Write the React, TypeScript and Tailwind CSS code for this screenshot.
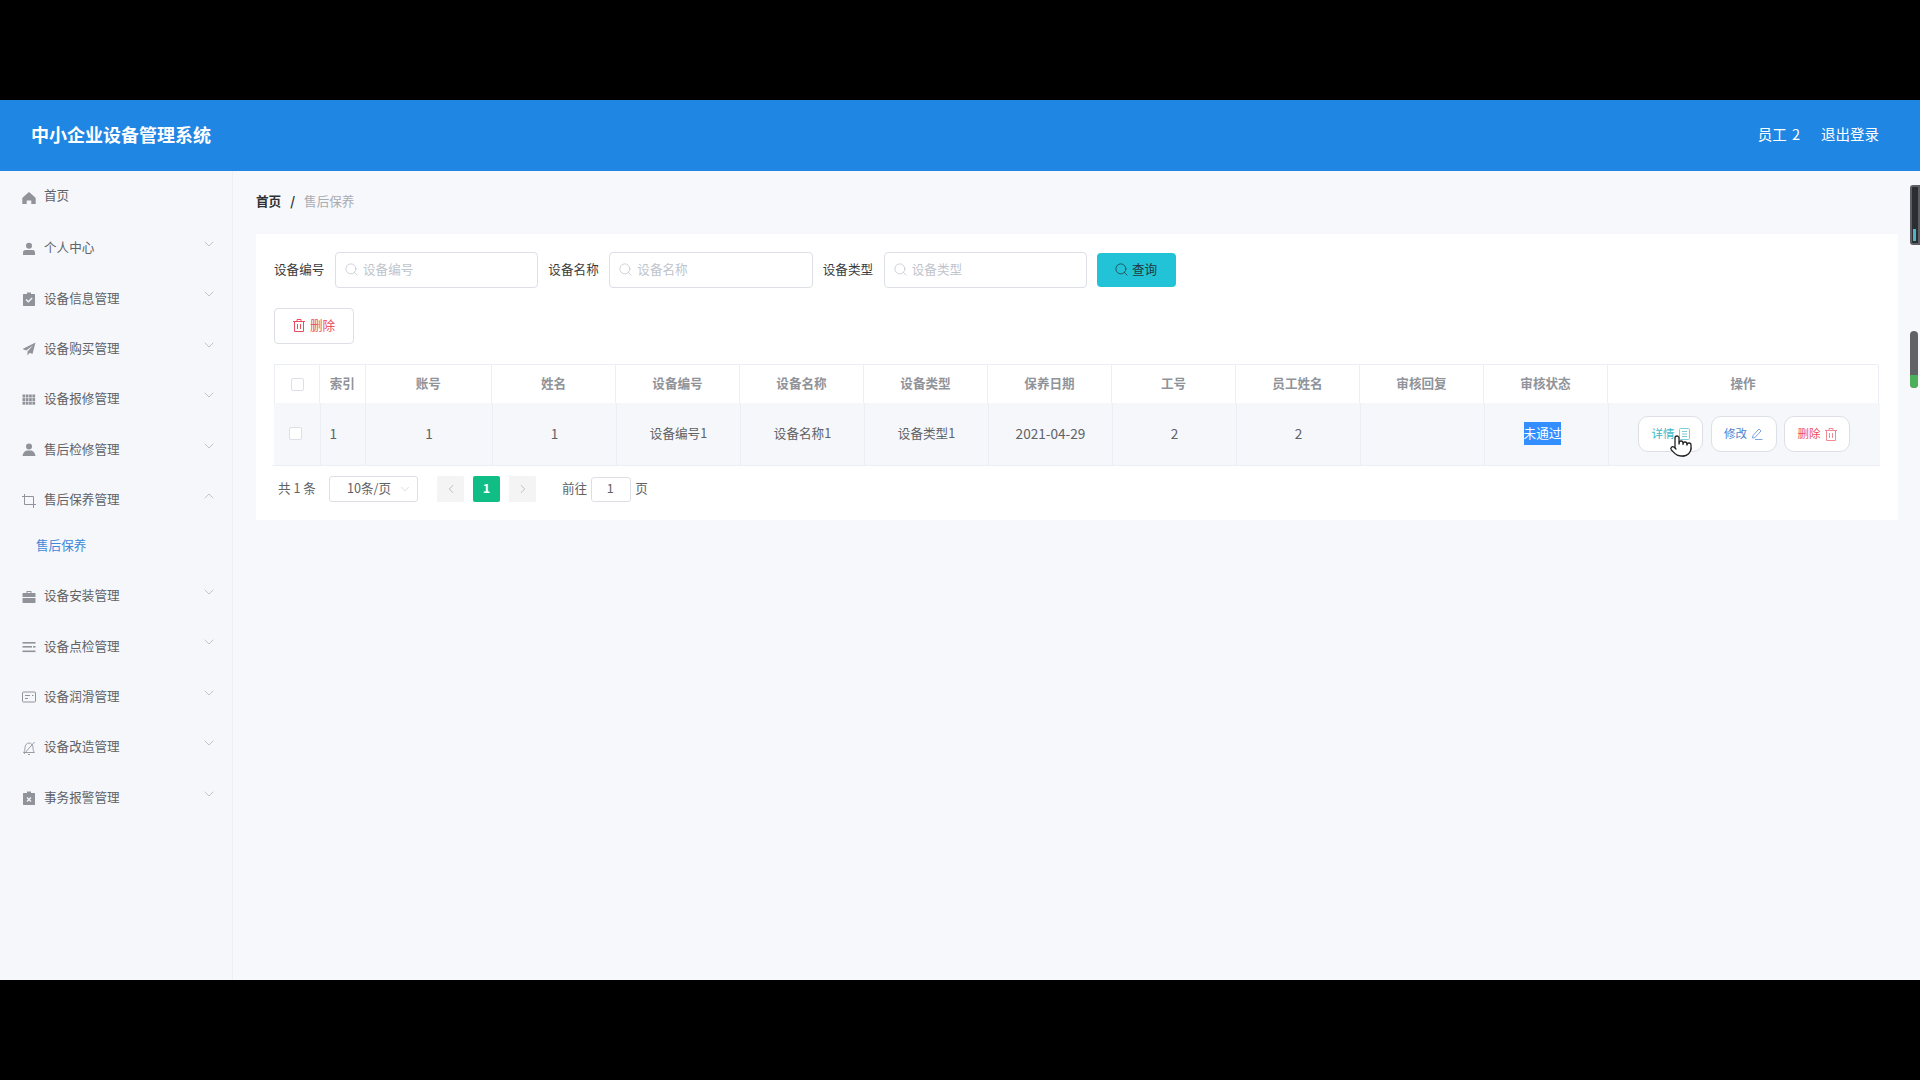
import { ChevronDown, ChevronLeft, ChevronRight, ChevronUp, Pointer, Search } from 'lucide-react'
import type { ReactNode } from 'react'

const gray = '#909399'

const HomeIcon = () => (
  <svg width="14" height="14" viewBox="0 0 14 14" fill={gray}>
    <path d="M7 1 1 6.2c-.6.5-.7 1-.7 1.6V13h4.4V9.400h4.600V13h4.400V7.800c0-.6-.1-1.100-.7-1.600z" />
  </svg>
)
const UserIcon = () => (
  <svg width="14" height="14" viewBox="0 0 14 14" fill={gray}>
    <circle cx="7" cy="3.800" r="3" />
    <path d="M1 10.500C1 8.800 2.200 8 3.500 8h7c1.300 0 2.500.8 2.500 2.500V13H1z" />
  </svg>
)
const ClipIcon = ({ mark }: { mark: 'check' | 'x' }) => (
  <svg width="14" height="14" viewBox="0 0 14 14">
    <path fill={gray} d="M5 .5h4V2h3.500c.3 0 .5.2.5.5v11c0 .3-.2.5-.5.5h-11c-.3 0-.5-.2-.5-.5v-11c0-.3.2-.5.5-.5H5z" />
    {mark === 'check' ? (
      <path d="m4 7.500 2.300 2.300L10.200 6" fill="none" stroke="#f5f7fb" strokeWidth="1.300" />
    ) : (
      <path d="m5 6.500 4 4m0-4-4 4" fill="none" stroke="#f5f7fb" strokeWidth="1.200" />
    )}
  </svg>
)
const PlaneIcon = () => (
  <svg width="14" height="14" viewBox="0 0 14 14" fill={gray}>
    <path d="M13.500.5.500 7l3.700 1.500L11 3.500 5.500 9.500v4l2.200-2.800 2.800 1.300z" />
  </svg>
)
const GridIcon = () => (
  <svg width="14" height="14" viewBox="0 0 14 14" fill={gray}>
    {[0, 1, 2, 3].map((c) =>
      [0, 1, 2].map((r) => <rect key={`${c}-${r}`} x={0.5 + c * 3.3} y={1.500 + r * 3.6} width="2.700" height="3" />),
    )}
  </svg>
)
const CustomIcon = () => (
  <svg width="14" height="14" viewBox="0 0 14 14" fill={gray}>
    <circle cx="7" cy="3.500" r="3" />
    <path d="M4.500 7.500h5c2 .5 3.500 2.500 4 5.500H.5c.5-3 2-5 4-5.500z" />
  </svg>
)
const CropIcon = () => (
  <svg width="14" height="14" viewBox="0 0 14 14" fill="none" stroke={gray} strokeWidth="1">
    <path d="M2.500 0v10.500H14M0 2.500h11.500V14" />
  </svg>
)
const CaseIcon = () => (
  <svg width="14" height="14" viewBox="0 0 14 14" fill={gray}>
    <path d="M4.500 3V1h5v2H13c.3 0 .5.2.5.5V7H.5V3.500c0-.3.2-.5.5-.5zM5.500 3h3V2h-3zM.5 8h13v4.500c0 .3-.2.5-.5.5H1c-.3 0-.5-.2-.5-.5z" />
  </svg>
)
const LinesIcon = () => (
  <svg width="14" height="14" viewBox="0 0 14 14" fill={gray}>
    <rect x="0.500" y="2" width="13" height="1.600" />
    <rect x="0.500" y="6" width="9.500" height="1.600" />
    <rect x="11" y="6" width="2.500" height="1.600" />
    <rect x="0.500" y="10.500" width="13" height="1.600" />
  </svg>
)
const CardIcon = () => (
  <svg width="14" height="14" viewBox="0 0 14 14" fill="none" stroke={gray} strokeWidth="1">
    <rect x="0.500" y="2" width="13" height="10" rx="1" />
    <path d="M3 5.500h5M3 8.500h3M10 5.500h1.500" />
  </svg>
)
const BellOffIcon = () => (
  <svg width="14" height="14" viewBox="0 0 14 14" fill="none" stroke={gray} strokeWidth="0.900">
    <path d="M1.500 11.500c1-1 1.500-2.500 1.500-5C3 4 5 2 7 2s4 2 4 4.500c0 2.500.5 4 1.500 5zM12.500 1 2 13M6 13.500h2" />
  </svg>
)

const Trash = ({ className }: { className: string }) => (
  <svg className={className} width="12" height="13" viewBox="0 0 12 13" fill="none" stroke="currentColor" strokeWidth="1">
    <path d="M0 2.500h12M4 2.500V.5h4v2M1.500 2.500v10h9v-10M4.500 5v5M7.500 5v5" />
  </svg>
)
const Doc = ({ className }: { className: string }) => (
  <svg className={className} width="11" height="12" viewBox="0 0 11 12" fill="none" stroke="currentColor" strokeWidth="1">
    <rect x="0.500" y="0.500" width="10" height="11" rx="1" />
    <path d="M3 3.500h5M3 6h5M3 8.500h5" />
  </svg>
)
const Pen = ({ className }: { className: string }) => (
  <svg className={className} width="12" height="12" viewBox="0 0 12 12" fill="none" stroke="currentColor" strokeWidth="1">
    <path d="M8 1 10 3 4 9.500 1.500 10 2 7.500zM4 11.500h7.500" />
  </svg>
)

type MenuItem = { label: string; icon: ReactNode; open?: boolean; plain?: boolean }

const menu: MenuItem[] = [
  { label: '首页', icon: <HomeIcon />, plain: true },
  { label: '个人中心', icon: <UserIcon /> },
  { label: '设备信息管理', icon: <ClipIcon mark="check" /> },
  { label: '设备购买管理', icon: <PlaneIcon /> },
  { label: '设备报修管理', icon: <GridIcon /> },
  { label: '售后检修管理', icon: <CustomIcon /> },
  { label: '售后保养管理', icon: <CropIcon />, open: true },
  { label: '设备安装管理', icon: <CaseIcon /> },
  { label: '设备点检管理', icon: <LinesIcon /> },
  { label: '设备润滑管理', icon: <CardIcon /> },
  { label: '设备改造管理', icon: <BellOffIcon /> },
  { label: '事务报警管理', icon: <ClipIcon mark="x" /> },
]

function Sidebar() {
  return (
    <aside className="w-[233px] shrink-0 border-r border-[#edeff3] bg-[#f5f7fb]">
      {menu.map((item) => (
        <div key={item.label}>
          <div className={`relative flex items-center pl-[22px] text-[12.6px] text-[#606266] ${item.plain ? 'h-[52px]' : 'h-[50.4px]'}`}>
            <span className="mt-[1px] w-[22px] shrink-0">{item.icon}</span>
            <span className={item.plain ? '-mt-[3px]' : '-mt-[1px]'}>{item.label}</span>
            {!item.plain &&
              (item.open ? (
                <ChevronUp className="absolute left-[201px] top-[13px] text-[#a8abb2]" size={16} strokeWidth={1} />
              ) : (
                <ChevronDown className="absolute left-[201px] top-[13px] text-[#a8abb2]" size={16} strokeWidth={1} />
              ))}
          </div>
          {item.open && (
            <div className="flex h-[45.600px] items-center pl-9 text-[12.6px] text-[#3f87d8]">
              <span className="-mt-[5px]">售后保养</span>
            </div>
          )}
        </div>
      ))}
    </aside>
  )
}

function SearchField({ label }: { label: string }) {
  return (
    <>
      <span className="mr-[10.600px] -mt-[1px] text-[12.6px] text-[#3a3c40]">{label}</span>
      <div className="mr-[10px] flex h-9 w-[203.400px] items-center rounded border border-[#dcdfe6] bg-white pl-[8px]">
        <Search className="mr-[4px] -mt-[1px] text-[#c0c4cc]" size={15} strokeWidth={1.200} />
        <span className="-mt-[2px] text-[12.6px] text-[#c0c4cc]">{label}</span>
      </div>
    </>
  )
}

const headCols = 'grid-cols-[45px_45.500px_126.500px_124px_124px_124px_124px_124px_124px_124px_124px_124px_271px]'
const rowCols = 'grid-cols-[46.500px_45.500px_127px_124px_124px_124px_124px_124px_124px_124px_124px_124px_271px]'
const heads = ['索引', '账号', '姓名', '设备编号', '设备名称', '设备类型', '保养日期', '工号', '员工姓名', '审核回复', '审核状态', '操作']
const cells = ['1', '1', '设备编号1', '设备名称1', '设备类型1', '2021-04-29', '2', '2', '']

const Check = () => <span className="block size-[13px] rounded-[2px] border border-[#dcdfe6] bg-white" />

function DataTable() {
  return (
    <div className="ml-[18px] mr-[18px] mt-[20px]">
      <div className={`grid h-[39px] ${headCols} w-[1604px] border-l border-t border-[#ebeef5] bg-white text-[12.6px] font-bold text-[#909399]`}>
        <div className="flex items-center justify-center border-r border-[#ebeef5]"><Check /></div>
        {heads.map((h) => (
          <div key={h} className="flex items-center justify-center border-r border-[#ebeef5] pb-[1px]">{h}</div>
        ))}
      </div>
      <div className={`grid h-[62px] ${rowCols} w-[1606px] bg-[#f5f7fa] text-[12.6px] text-[#606266]`}>
        <div className="flex items-center justify-center border-r border-[#ebeef5] pb-[1px] pr-[2px]"><Check /></div>
        <div className="flex items-center border-r border-[#ebeef5] pb-[2px] pl-[9px] text-[13.600px]">1</div>
        {cells.map((c, i) => (
          <div key={i} className={`flex items-center justify-center border-r border-[#ebeef5] pb-[2px] ${/^[\d-]+$/.test(c) ? 'text-[13.600px]' : ''}`}>{c}</div>
        ))}
        <div className="flex items-center justify-center border-r border-[#ebeef5] pb-[1px] pr-2">
          <span className="bg-[#338fff] px-0 py-[2px] text-white">未通过</span>
        </div>
        <div className="flex items-center gap-[7.500px] pl-[29px] text-[11.500px]">
          <button className="relative flex h-9 w-[65px] items-center justify-center gap-1 rounded-[10px] border border-[#dcdfe6] bg-white text-[#3fb8c8]">
            详情 <Doc className="text-[#7ccdd6]" />
            <Pointer className="absolute left-[30px] top-[17px]" size={24} strokeWidth={1.300} fill="white" color="#222" />
          </button>
          <button className="flex h-9 w-[66px] items-center justify-center gap-1 rounded-[10px] border border-[#dcdfe6] bg-white text-[#4a7fd0]">
            修改 <Pen className="text-[#7fa3dd]" />
          </button>
          <button className="flex h-9 w-[66px] items-center justify-center gap-1 rounded-[10px] border border-[#dcdfe6] bg-white text-[#ec4d5c]">
            删除 <Trash className="text-[#f08b95]" />
          </button>
        </div>
      </div>
      <div className="-ml-[2px] h-px w-[1608px] bg-[#ebeef5]" />
    </div>
  )
}

function Pager() {
  return (
    <div className="ml-[22px] mt-[10px] flex h-[26px] items-center text-[12.6px] text-[#606266]">
      <span className="mr-[13px] -mt-[2px] w-[38px] whitespace-nowrap">共 1 条</span>
      <div className="relative flex h-[26px] w-[89px] items-center rounded-[3px] border border-[#dcdfe6] pb-[2px] pl-[17px]">
        10条/页
        <ChevronDown className="absolute right-[5px] top-[5px] text-[#c0c4cc]" size={14} strokeWidth={1} />
      </div>
      <div className="ml-[19px] flex h-[26px] w-[27px] items-center justify-center rounded-[2px] bg-[#f4f4f5] text-[#b4b7bd]">
        <ChevronLeft size={14} strokeWidth={1.500} />
      </div>
      <div className="ml-[9px] flex h-[26px] w-[27px] items-center justify-center rounded-[2px] bg-[#0fbd85] pb-[1px] font-bold text-white">1</div>
      <div className="ml-[9px] flex h-[26px] w-[27px] items-center justify-center rounded-[2px] bg-[#f4f4f5] text-[#b4b7bd]">
        <ChevronRight size={14} strokeWidth={1.500} />
      </div>
      <span className="ml-[26px] -mt-[2px]">前往</span>
      <div className="mx-1 flex h-[25px] w-[40px] items-center justify-center rounded-[3px] border border-[#dcdfe6] pb-[2px] pr-[2px]">1</div>
      <span className="-mt-[2px]">页</span>
    </div>
  )
}

export default function App() {
  return (
    <div className="relative flex h-screen flex-col overflow-hidden bg-black font-['Noto_Sans_CJK_SC','Microsoft_YaHei',sans-serif]">
      <div className="mt-[100px] flex h-[880px] flex-col bg-[#f7f8fb]">
        <header className="flex h-[71px] shrink-0 items-center justify-between bg-[#1f86e3] pl-[31px] pr-[41px] text-white">
          <h1 className="pb-[2px] text-[18px] font-bold">中小企业设备管理系统</h1>
          <div className="flex gap-[21px] pb-[3px] text-[14.500px]">
            <span className="[word-spacing:2px]">员工 2</span>
            <span>退出登录</span>
          </div>
        </header>
        <div className="flex flex-1">
          <Sidebar />
          <main className="flex-1 pl-[23px] pr-[22px]">
            <div className="flex h-[63px] items-center gap-[9px] pb-[2px] text-[12.6px]">
              <span className="font-bold text-[#303133]">首页</span>
              <span className="font-bold text-[#303133]">/</span>
              <span className="text-[#a8abb2]">售后保养</span>
            </div>
            <section className="h-[286px] bg-white pt-[18px]">
              <div className="flex items-center pl-[18px]">
                <SearchField label="设备编号" />
                <SearchField label="设备名称" />
                <SearchField label="设备类型" />
                <button className="flex h-[34px] w-[79px] items-center justify-center gap-[3px] rounded bg-[#22c3d6] pb-[2px] pr-[2px] text-[12.6px] text-[#23383c]">
                  <Search size={15} strokeWidth={1.200} />
                  查询
                </button>
              </div>
              <button className="ml-[18px] mt-5 flex h-9 w-[80px] items-center justify-center gap-[5px] rounded border border-[#dcdfe6] bg-white pb-[2px] text-[12.6px] text-[#ec4d5c]">
                <Trash className="" />
                删除
              </button>
              <DataTable />
              <Pager />
            </section>
          </main>
        </div>
      </div>
      <div className="absolute left-[1910px] top-[185px] h-[60px] w-[10px] rounded-l-[3px] border-2 border-[#5b5e63] bg-[#2b2d30]">
        <div className="absolute bottom-[2px] left-[1px] h-[12px] w-[3px] bg-[#4fb3c9]" />
      </div>
      <div className="absolute left-[1910px] top-[331px] h-[57px] w-[8px] overflow-hidden rounded-full bg-[#606265]">
        <div className="absolute bottom-0 h-[13px] w-full bg-[#4caf5a]" />
      </div>
    </div>
  )
}
